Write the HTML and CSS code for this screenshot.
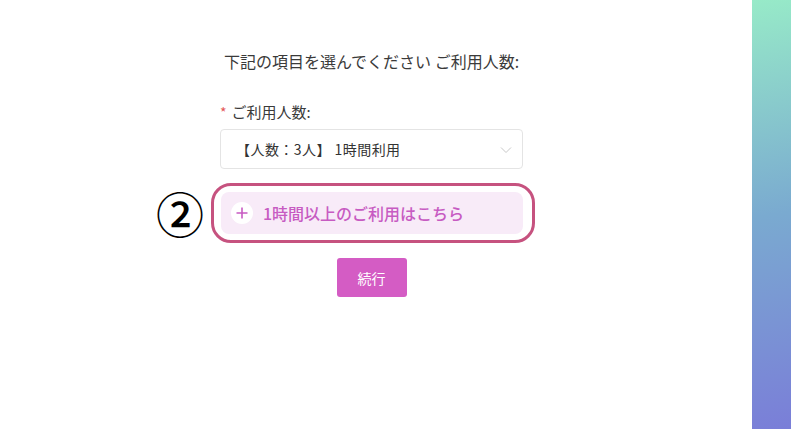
FILE: index.html
```html
<!DOCTYPE html>
<html lang="ja">
<head>
<meta charset="utf-8">
<link rel="stylesheet" href="styles.css">
</head>
<body>
<div class="page">
  <main class="main">
    <div class="form">
      <h2 class="title">下記の項目を選んでください ご利用人数:</h2>
      <div class="field">
        <label class="label"><span class="req">*</span>ご利用人数:</label>
        <div class="select">
          <span class="select-text">【人数：3人】 1時間利用</span>
          <svg class="chev" width="12" height="8" viewBox="0 0 12 8"><path d="M1 1.5 L6 6.5 L11 1.5" fill="none" stroke="#c8c8c8" stroke-width="1"/></svg>
        </div>
      </div>
      <div class="more-wrap">
        <span class="circled">②</span>
        <div class="ring"></div>
        <div class="more">
          <span class="plus"><svg width="12" height="12" viewBox="0 0 12 12"><path d="M6 0.5 V11.5 M0.5 6 H11.5" stroke="#c75bc2" stroke-width="1.6"/></svg></span>
          <span class="more-text">1時間以上のご利用はこちら</span>
        </div>
      </div>
      <div class="actions">
        <button class="btn">続行</button>
      </div>
    </div>
  </main>
  <aside class="bar"></aside>
</div>
</body>
</html>
```
FILE: styles.css
```css
* { box-sizing: border-box; }
html, body { margin: 0; padding: 0; background: #fff; }
body {
  font-family: "Noto Sans CJK JP", "Noto Sans", sans-serif;
  color: #333;
}
.page {
  display: flex;
  width: 791px;
  height: 429px;
}
.main {
  flex: 1;
  display: flex;
  justify-content: center;
  padding-right: 9px;
}
.form {
  width: 303px;
  padding-top: 49px;
}
.title {
  margin: 0;
  font-size: 16px;
  font-weight: 400;
  line-height: 24px;
  white-space: nowrap;
  text-align: center;
  color: #3a3a3a;
  margin-left: -6px;
  margin-right: -6px;
}
.field { margin-top: 28px; }
.label {
  display: block;
  font-size: 15px;
  line-height: 22px;
  color: #3a3a3a;
  margin-bottom: 6px;
}
.req {
  color: #e45656;
  margin-right: 5px;
  font-size: 14px;
}
.select {
  height: 40px;
  border: 1px solid #e4e4e4;
  border-radius: 4px;
  display: flex;
  align-items: center;
  justify-content: space-between;
  padding: 0 10px 0 15px;
}
.select-text {
  font-size: 14px;
  color: #333;
  letter-spacing: 0.45px;
}
.chev { margin-top: 1px; }
.more-wrap {
  position: relative;
  margin-top: 23px;
}
.more {
  height: 42px;
  background: #f8ebf8;
  border-radius: 8px;
  display: flex;
  align-items: center;
  padding-left: 10px;
  margin-left: 1px;
}
.plus {
  width: 22px;
  height: 22px;
  border-radius: 50%;
  background: #fff;
  display: flex;
  align-items: center;
  justify-content: center;
  margin-right: 10px;
}
.more-text {
  font-size: 16px;
  font-weight: 500;
  color: #c75bc2;
}
.ring {
  position: absolute;
  left: -9px;
  top: -9px;
  right: -12px;
  bottom: -9px;
  border: 3px solid #c6527f;
  border-radius: 20px;
  pointer-events: none;
}
.circled {
  position: absolute;
  left: -64px;
  top: -9px;
  font-size: 48px;
  font-weight: 500;
  line-height: 58px;
  color: #000;
  font-family: "Noto Sans CJK JP", sans-serif;
}
.actions {
  display: flex;
  justify-content: center;
  margin-top: 24px;
}
.btn {
  width: 70px;
  height: 39px;
  border: none;
  border-radius: 3px;
  background: #d45cc4;
  color: #fff;
  font-family: inherit;
  font-size: 14px;
  padding: 0;
}
.bar {
  width: 39px;
  background: linear-gradient(170deg, #97eac8 0%, #7aaad0 50%, #7a7ed8 100%);
}
```
